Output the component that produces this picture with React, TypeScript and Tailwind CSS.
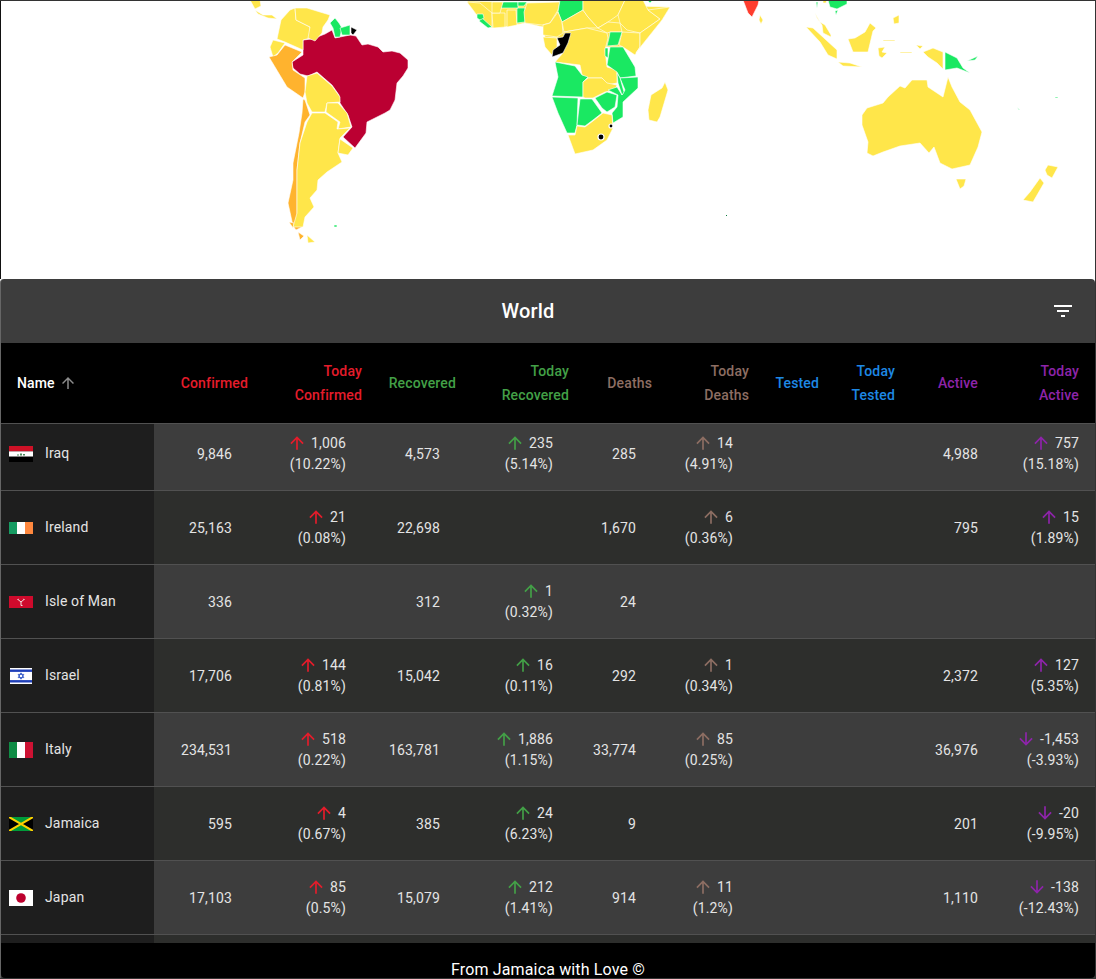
import React from 'react';

const YELLOW = '#ffe64a';
const GREEN = '#1ae862';
const DARKRED = '#bb0032';
const ORANGE = '#ffb32e';

const MAP_SHAPES: [string, string][] = [
  // south america
  [DARKRED, '303,40 312,39 325,34 332,30 335,38 350,35 356,36 362,45 368,44 378,47 383,52 392,51 400,53 408,60 408,68 403,76 397,83 395,100 390,110 385,113 367,122 366,133 355,148 343,137 352,127 348,115 340,103 339,95 332,85 317,72 308,76 300,74 293,68 292,62 303,55'],
  [YELLOW, '281,20 290,10 295,8 296,20 310,27 310,38 303,40 303,50 285,42 277,39'],
  [YELLOW, '295,8 307,8 320,12 330,15 328,20 323,27 322,33 315,41 308,38 310,27 296,20'],
  [YELLOW, '270,47 273,40 285,43 278,53 273,57'],
  [ORANGE, '269,57 277,55 285,45 302,52 292,62 293,70 305,78 305,92 303,98 287,87 278,72'],
  [ORANGE, '303,99 305,100 310,115 305,122 300,143 297,170 297,187 297,213 302,227 296,230 293,226 288,203 293,180 293,163 299,133 302,113'],
  [ORANGE, '289,222 294,223 293,228'],
  [ORANGE, '298,232 304,236 300,240'],
  [YELLOW, '307,76 317,73 332,86 340,97 340,102 327,103 325,112 312,112 307,103 305,92'],
  [YELLOW, '327,103 338,103 347,113 351,127 338,129 340,122 326,112'],
  [YELLOW, '312,113 325,113 338,122 337,129 350,128 340,138 338,153 342,162 327,172 318,180 317,190 310,198 314,207 305,217 303,227 293,227 297,213 297,170 300,143 307,122'],
  [YELLOW, '307,235 315,242 308,243'],
  [YELLOW, '340,139 353,148 348,155 338,153'],
  [GREEN, '330,23 335,18 339,23 342,28 340,37 335,37 333,28'],
  [GREEN, '340,28 350,25 350,35 342,35'],
  ['#000000', '351,27 357,30 353,35 351,33'],
  [YELLOW, '250,0 260,0 261,6 255,9'],
  [YELLOW, '255,10 263,15 272,15 277,19 268,18 258,14'],
  [GREEN, '334,225 337,225 337,227 334,227'],
  // africa, north band
  [YELLOW, '467,1 670,7 662,20 642,45 636,53 625,47 607,47 564,40 557,38 545,38 543,27 525,23 505,27 492,28 478,17'],
  [YELLOW, '467,2 480,3 492,13 492,28 484,24 476,14'],
  [GREEN, '482,18 492,27 488,28 479,21'],
  [GREEN, '477,14 483,14 484,18 480,20 477,18'],
  [YELLOW, '492,13 505,13 505,27 493,28'],
  [YELLOW, '507,10 516,10 517,25 507,27'],
  [GREEN, '517,8 525,8 525,22 517,23'],
  [GREEN, '500,8 503,2 518,2 518,8'],
  [GREEN, '518,2 527,2 524,6 518,6'],
  [YELLOW, '492,2 503,2 500,13 492,13'],
  [YELLOW, '527,3 560,2 558,10 550,23 542,25 525,23 524,12'],
  [GREEN, '560,0 583,0 583,10 562,22 558,12'],
  [YELLOW, '558,12 562,22 563,33 557,37 543,35 543,25 550,23'],
  [YELLOW, '543,37 557,38 557,47 552,55 545,47'],
  [YELLOW, '562,22 583,10 588,17 598,28 587,28 564,32'],
  [YELLOW, '583,0 625,0 618,15 608,22 598,28 588,17 583,10'],
  [YELLOW, '598,28 608,22 620,23 622,32 610,32 607,33'],
  [YELLOW, '625,0 643,0 648,10 660,19 640,33 627,30 620,23 618,15'],
  [YELLOW, '622,32 640,33 640,47 635,55 623,47 619,45'],
  [YELLOW, '640,33 660,19 648,10 670,7 662,20 642,45 636,53 640,47'],
  [GREEN, '647,0 653,0 650,3'],
  [YELLOW, '564,32 587,28 607,33 608,38 605,50 607,67 617,70 617,83 607,85 602,78 588,78 582,75 580,65 555,62 563,53 564,40'],
  ['#000000', '565,33 571,33 568,43 563,53 552,57 553,50 560,45 557,38 563,37'],
  // africa, green south
  [GREEN, '610,32 622,32 618,45 607,46 609,38'],
  [GREEN, '605,48 608,48 608,58 605,56'],
  [GREEN, '610,47 623,47 635,67 636,76 620,78 617,72 607,65'],
  [GREEN, '555,62 575,66 582,75 588,77 583,82 583,97 552,96 558,77'],
  [YELLOW, '583,82 588,78 602,78 607,83 617,85 615,90 605,92 593,98 585,98 583,97'],
  [GREEN, '552,97 578,98 577,125 575,133 567,133 558,113'],
  [GREEN, '580,99 592,99 602,113 593,120 585,126 577,125'],
  [GREEN, '595,98 607,92 617,95 615,107 607,112 602,108'],
  [GREEN, '638,77 638,88 623,102 623,117 613,123 612,113 617,107 618,95 608,90 617,87 622,95 625,90 620,78'],
  [GREEN, '617,73 620,78 624,92 622,95 618,83'],
  [YELLOW, '577,126 585,127 593,121 603,113 612,115 613,128 607,140 593,150 575,154 568,135 575,135'],
  [YELLOW, '665,82 668,90 660,117 657,122 649,120 648,110 651,95 662,88'],
  // asia and oceania
  ['#ff3d2e', '743,0 759,0 758,5 752,17 748,13'],
  [YELLOW, '760,15 763,20 761,24 759,20'],
  [GREEN, '828,0 847,0 847,4 837,9 830,7'],
  [GREEN, '835,11 838,10 836,15'],
  [GREEN, '816,2 818,2 817,8'],
  [YELLOW, '823,0 827,0 826,3 823,3'],
  [YELLOW, '815,13 820,22 825,25 831,35 831,37 823,33 822,25 817,18'],
  [YELLOW, '806,27 813,28 837,50 837,59 828,55 820,42'],
  [YELLOW, '838,62 850,63 862,67 843,66'],
  [YELLOW, '848,39 855,38 865,32 870,23 876,28 873,31 868,52 853,52'],
  [YELLOW, '878,48 885,47 882,52 887,53 882,58 879,56'],
  [YELLOW, '893,18 899,15 899,23 894,24'],
  [YELLOW, '883,40 895,40 895,41 883,41'],
  [YELLOW, '900,52 912,52 912,53 900,53'],
  [YELLOW, '916,45 923,46 920,49'],
  [YELLOW, '923,52 933,48 943,52 943,69 937,63 928,57'],
  [GREEN, '945,52 957,58 963,68 970,73 957,68 945,70'],
  [GREEN, '967,61 978,56 975,60'],
  [YELLOW, '862,115 867,108 883,103 888,97 900,86 905,88 912,80 927,80 928,87 943,97 948,77 952,87 960,102 970,110 982,132 978,147 970,165 952,169 940,163 934,147 929,153 920,143 900,146 883,152 873,156 867,153 868,142 862,125'],
  [YELLOW, '956,179 966,179 964,186 960,189'],
  [YELLOW, '1048,165 1058,167 1052,178 1047,175 1045,170'],
  [YELLOW, '1040,178 1044,183 1033,202 1023,200 1030,192'],
  [GREEN, '1055,97 1058,97 1058,98 1055,98'],
  [GREEN, '1017,107 1020,110 1019,110'],
];

const WorldMap = () => (
  <div className="h-[278px] shrink-0 border-l border-[#111111]">
    <svg viewBox="0 0 1094 278" className="block h-[278px] w-[1094px] bg-white">
      <g transform="translate(-1 -1)">
        {MAP_SHAPES.map(([fill, points], i) => (
          <polygon key={i} points={points} fill={fill} stroke="#ffffff" strokeWidth={0.6} strokeLinejoin="round" />
        ))}
        <circle cx={601} cy={137} r={3} fill="#000000" stroke="#ffffff" strokeWidth={1.2} />
        <circle cx={611} cy={126} r={2} fill="#000000" stroke="#ffffff" strokeWidth={1.2} />
        <rect x={726} y={215} width={1} height={1} fill="#0c7a3c" />
      </g>
    </svg>
  </div>
);

const Arrow = ({ down, color, size = 20 }: { down?: boolean; color: string; size?: number }) => (
  <svg viewBox="0 0 24 24" width={size} height={size} fill={color} className={down ? 'shrink-0 rotate-180' : 'shrink-0'}>
    <path d="M4 12l1.41 1.41L11 7.83V20h2V7.83l5.58 5.59L20 12l-8-8-8 8z" />
  </svg>
);

const Flag = ({ name }: { name: string }) => {
  if (name === 'Iraq') return (
    <svg viewBox="0 0 24 16" className="h-4 w-6">
      <rect width="24" height="5.4" fill="#ce1126" />
      <rect y="5.4" width="24" height="5.3" fill="#ffffff" />
      <rect y="10.7" width="24" height="5.3" fill="#000000" />
      <path d="M8 8.4h2v1H8zM11 7.6h2v1.8h-2zM14 8h2v1.4h-2z" fill="#4d8a5c" />
    </svg>
  );
  if (name === 'Ireland') return (
    <svg viewBox="0 0 24 12" className="h-3 w-6">
      <rect width="8" height="12" fill="#169b62" />
      <rect x="8" width="8" height="12" fill="#ffffff" />
      <rect x="16" width="8" height="12" fill="#ff883e" />
    </svg>
  );
  if (name === 'Isle of Man') return (
    <svg viewBox="0 0 24 12" className="h-3 w-6">
      <rect width="24" height="12" fill="#cf0a2c" />
      <path d="M9 3.5l3 2.5 3-2.5M12 6v3.5M9.5 2.8l-1 1.2M15.5 4l-1-1.2M12 9.5h1.5" fill="none" stroke="#f3dfe0" strokeWidth="1" />
    </svg>
  );
  if (name === 'Israel') return (
    <svg viewBox="0 0 22 16" className="h-4 w-[22px]">
      <rect width="22" height="16" fill="#ffffff" />
      <rect y="1.5" width="22" height="2.4" fill="#1f3fb8" />
      <rect y="12.1" width="22" height="2.4" fill="#1f3fb8" />
      <path d="M11 4.8l2.8 4.8H8.2zM11 11.2L8.2 6.4h5.6z" fill="none" stroke="#3257c6" strokeWidth="0.9" />
    </svg>
  );
  if (name === 'Italy') return (
    <svg viewBox="0 0 24 16" className="h-4 w-6">
      <rect width="8" height="16" fill="#0f8c45" />
      <rect x="8" width="8" height="16" fill="#ffffff" />
      <rect x="16" width="8" height="16" fill="#cd1233" />
    </svg>
  );
  if (name === 'Jamaica') return (
    <svg viewBox="0 0 24 14" className="h-3.5 w-6">
      <rect width="24" height="14" fill="#009b3a" />
      <path d="M0 0l12 7L0 14zM24 0L12 7l12 7z" fill="#000000" />
      <path d="M0 0l24 14M24 0L0 14" stroke="#fed100" strokeWidth="2" />
    </svg>
  );
  if (name === 'Japan') return (
    <svg viewBox="0 0 24 16" className="h-4 w-6">
      <rect width="24" height="16" fill="#ffffff" />
      <circle cx="12" cy="8" r="4.8" fill="#bc002d" />
    </svg>
  );
  return null;
};

type Delta = { v: string; p: string; down?: boolean } | null;

interface RowData {
  name: string;
  confirmed: string;
  todayConfirmed: Delta;
  recovered: string;
  todayRecovered: Delta;
  deaths: string;
  todayDeaths: Delta;
  active: string;
  todayActive: Delta;
}

const ROWS: RowData[] = [
  { name: 'Iraq', confirmed: '9,846', todayConfirmed: { v: '1,006', p: '(10.22%)' }, recovered: '4,573', todayRecovered: { v: '235', p: '(5.14%)' }, deaths: '285', todayDeaths: { v: '14', p: '(4.91%)' }, active: '4,988', todayActive: { v: '757', p: '(15.18%)' } },
  { name: 'Ireland', confirmed: '25,163', todayConfirmed: { v: '21', p: '(0.08%)' }, recovered: '22,698', todayRecovered: null, deaths: '1,670', todayDeaths: { v: '6', p: '(0.36%)' }, active: '795', todayActive: { v: '15', p: '(1.89%)' } },
  { name: 'Isle of Man', confirmed: '336', todayConfirmed: null, recovered: '312', todayRecovered: { v: '1', p: '(0.32%)' }, deaths: '24', todayDeaths: null, active: '', todayActive: null },
  { name: 'Israel', confirmed: '17,706', todayConfirmed: { v: '144', p: '(0.81%)' }, recovered: '15,042', todayRecovered: { v: '16', p: '(0.11%)' }, deaths: '292', todayDeaths: { v: '1', p: '(0.34%)' }, active: '2,372', todayActive: { v: '127', p: '(5.35%)' } },
  { name: 'Italy', confirmed: '234,531', todayConfirmed: { v: '518', p: '(0.22%)' }, recovered: '163,781', todayRecovered: { v: '1,886', p: '(1.15%)' }, deaths: '33,774', todayDeaths: { v: '85', p: '(0.25%)' }, active: '36,976', todayActive: { v: '-1,453', p: '(-3.93%)', down: true } },
  { name: 'Jamaica', confirmed: '595', todayConfirmed: { v: '4', p: '(0.67%)' }, recovered: '385', todayRecovered: { v: '24', p: '(6.23%)' }, deaths: '9', todayDeaths: null, active: '201', todayActive: { v: '-20', p: '(-9.95%)', down: true } },
  { name: 'Japan', confirmed: '17,103', todayConfirmed: { v: '85', p: '(0.5%)' }, recovered: '15,079', todayRecovered: { v: '212', p: '(1.41%)' }, deaths: '914', todayDeaths: { v: '11', p: '(1.2%)' }, active: '1,110', todayActive: { v: '-138', p: '(-12.43%)', down: true } },
];

const RED = '#e51c2b';
const LIME = '#43a047';
const BROWN = '#8d6e63';
const BLUE = '#1e88e5';
const PURPLE = '#8e24aa';

const COLS = 'grid grid-cols-[153px_110px_114px_94px_113px_83px_97px_70px_76px_83px_101px]';

const HeadCell = ({ lines, color }: { lines: string[]; color: string }) => (
  <div className="flex flex-col justify-center pr-4 text-right leading-6" style={{ color }}>
    {lines.map((line) => <span key={line}>{line}</span>)}
  </div>
);

const DeltaCell = ({ delta, color, wide }: { delta: Delta; color: string; wide?: boolean }) => (
  <div className={wide ? 'flex flex-col justify-center pr-4 text-right leading-[21px]' : 'flex flex-col justify-center pr-8 text-right leading-[21px]'}>
    {delta && (
      <>
        <span className="flex items-center justify-end">
          <Arrow color={color} down={delta.down} />
          <span className="ml-1">{delta.v}</span>
        </span>
        <span>{delta.p}</span>
      </>
    )}
  </div>
);

const NumCell = ({ value, wide }: { value: string; wide?: boolean }) => (
  <div className={wide ? 'flex items-center justify-end pr-4' : 'flex items-center justify-end pr-8'}>{value}</div>
);

const Row = ({ row, light }: { row: RowData; light: boolean }) => (
  <div className={`${COLS} h-[74px] border-b border-[#515151] ${light ? 'bg-[#3d3d3d]' : 'bg-[#2d2e2c]'}`}>
    <div className="flex items-center bg-[#1e1e1e] pl-2">
      <span className="flex w-6 justify-center"><Flag name={row.name} /></span>
      <span className="ml-3 pb-0.5">{row.name}</span>
    </div>
    <NumCell value={row.confirmed} />
    <DeltaCell delta={row.todayConfirmed} color={RED} />
    <NumCell value={row.recovered} />
    <DeltaCell delta={row.todayRecovered} color={LIME} />
    <NumCell value={row.deaths} />
    <DeltaCell delta={row.todayDeaths} color={BROWN} />
    <div />
    <div />
    <NumCell value={row.active} wide />
    <DeltaCell delta={row.todayActive} color={PURPLE} wide />
  </div>
);

const BLANK: RowData = { name: '', confirmed: '', todayConfirmed: null, recovered: '', todayRecovered: null, deaths: '', todayDeaths: null, active: '', todayActive: null };

const App: React.FC = () => (
  <div className="flex h-[979px] w-[1096px] flex-col overflow-hidden border-y border-r border-[#333333] bg-white font-['Roboto',sans-serif] text-sm tracking-[0.15px]">
    <WorldMap />
    <div className="flex min-h-0 flex-1 flex-col overflow-hidden rounded-t border-l border-[#666666] bg-[#3d3d3d] text-[#e4e4e4]">
      <div className="flex h-16 shrink-0 items-center pl-4 pr-2">
        <h2 className="flex-1 text-center text-xl font-medium tracking-[0.15px] text-white">World</h2>
        <button className="flex h-12 w-12 items-center justify-center">
          <svg viewBox="0 0 24 24" width={24} height={24} fill="#ffffff">
            <path d="M10 18h4v-2h-4v2zM3 6v2h18V6H3zm3 7h12v-2H6v2z" />
          </svg>
        </button>
      </div>
      <div className={`${COLS} h-[81px] shrink-0 border-b border-[#515151] bg-black font-medium`}>
        <div className="flex items-center pl-4 text-white">
          Name
          <span className="ml-1"><Arrow color="#8c8c8c" size={18} /></span>
        </div>
        <HeadCell lines={['Confirmed']} color={RED} />
        <HeadCell lines={['Today', 'Confirmed']} color={RED} />
        <HeadCell lines={['Recovered']} color={LIME} />
        <HeadCell lines={['Today', 'Recovered']} color={LIME} />
        <HeadCell lines={['Deaths']} color={BROWN} />
        <HeadCell lines={['Today', 'Deaths']} color={BROWN} />
        <HeadCell lines={['Tested']} color={BLUE} />
        <HeadCell lines={['Today', 'Tested']} color={BLUE} />
        <HeadCell lines={['Active']} color={PURPLE} />
        <HeadCell lines={['Today', 'Active']} color={PURPLE} />
      </div>
      <div className="min-h-0 flex-1 overflow-hidden">
        <div className="-mt-[7px]">
          {ROWS.map((row, i) => <Row key={row.name} row={row} light={i % 2 === 0} />)}
          <Row row={BLANK} light={false} />
        </div>
      </div>
      <div className="h-[35px] shrink-0 rounded-b bg-black pt-[19px] text-center text-base leading-4 tracking-[0.15px] text-white">
        From Jamaica with Love ©
      </div>
    </div>
  </div>
);

export default App;
